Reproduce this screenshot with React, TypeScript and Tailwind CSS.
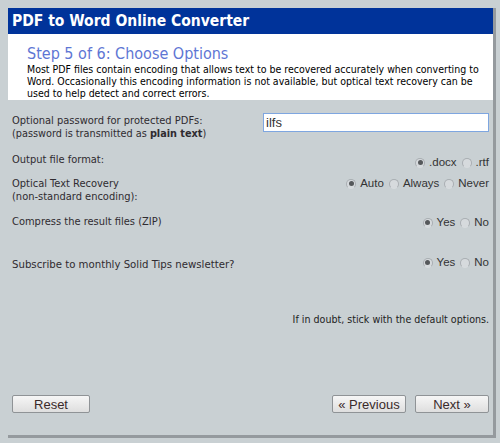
import React, { useState } from "react";

const sans = "font-['DejaVu_Sans_Condensed','DejaVu_Sans',sans-serif]";
const arial = "font-['Liberation_Sans',Arial,sans-serif]";

interface Option {
  value: string;
  label: string;
}

function Radio({ checked, onClick }: { checked: boolean; onClick: () => void }) {
  return (
    <span
      onClick={onClick}
      className="inline-flex items-center justify-center w-[10px] h-[10px] rounded-full border border-[#a9aeb2] border-b-[#d8dcde] bg-[#d6dadd]"
    >
      {checked && <span className="w-[5px] h-[5px] rounded-full bg-[#55585b]" />}
    </span>
  );
}

function RadioGroup({
  options,
  value,
  onChange,
}: {
  options: Option[];
  value: string;
  onChange: (v: string) => void;
}) {
  return (
    <div className={`flex items-center gap-[5px] text-[11.5px] text-[#333] ${arial}`}>
      {options.map((o) => (
        <label key={o.value} className="flex items-center gap-[4px] cursor-pointer">
          <Radio checked={value === o.value} onClick={() => onChange(o.value)} />
          <span>{o.label}</span>
        </label>
      ))}
    </div>
  );
}

function Button({ children, className }: { children: React.ReactNode; className?: string }) {
  return (
    <button
      type="button"
      className={`h-[18px] border border-[#8f9396] rounded-[2px] bg-gradient-to-b from-[#f6f6f6] to-[#dedede] text-[13px] leading-none text-[#3a2a2a] ${arial} ${className ?? ""}`}
    >
      {children}
    </button>
  );
}

export default function App() {
  const [format, setFormat] = useState("docx");
  const [ocr, setOcr] = useState("auto");
  const [zip, setZip] = useState("yes");
  const [news, setNews] = useState("yes");
  const [password, setPassword] = useState("ilfs");

  return (
    <div className="w-[500px] h-[443px] bg-[#c9d0d3] pt-[8px] pl-[8px]">
      <div className="w-[488px] h-[430px] flex flex-col border-r-[3px] border-b-[3px] border-[#959a9e]">
        {/* header */}
        <div className="h-[26px] bg-[#00339a] flex items-center pl-[4px] pt-[2px]">
          <h1 className={`text-white font-bold text-[15.5px] ${sans}`}>PDF to Word Online Converter</h1>
        </div>

        {/* step intro */}
        <div className="h-[66px] bg-white pl-[19px] pr-[10px] pt-[11px]">
          <h2 className={`text-[#5e76d4] text-[16px] leading-[18px] ${sans}`}>Step 5 of 6: Choose Options</h2>
          <p className={`text-black text-[10.5px] leading-[12px] ${sans}`}>
            Most PDF files contain encoding that allows text to be recovered accurately when converting to
            Word. Occasionally this encoding information is not available, but optical text recovery can be
            used to help detect and correct errors.
          </p>
        </div>

        {/* options */}
        <div className={`flex-1 flex flex-col px-[4px] pt-[13px] text-[#2f2b30] ${sans}`}>
          <div className="h-[38px] flex justify-between">
            <div className="pt-[1px]">
              <div className="text-[11px] leading-[13px]">Optional password for protected PDFs:</div>
              <div className="text-[10.8px] leading-[13px]">
                (password is transmitted as <b>plain text</b>)
              </div>
            </div>
            <input
              value={password}
              onChange={(e) => setPassword(e.target.value)}
              className={`w-[226px] h-[19px] border border-[#7ea6e0] bg-white px-[2px] text-[13px] text-[#333] outline-none ${arial}`}
            />
          </div>

          <div className="h-[24px] flex justify-between">
            <div className="text-[11px] leading-[13px] pt-[2px]">Output file format:</div>
            <div className="pt-[3px]">
              <RadioGroup
                options={[
                  { value: "docx", label: ".docx" },
                  { value: "rtf", label: ".rtf" },
                ]}
                value={format}
                onChange={setFormat}
              />
            </div>
          </div>

          <div className="h-[38px] flex justify-between">
            <div className="pt-[2px]">
              <div className="text-[11px] leading-[13px]">Optical Text Recovery</div>
              <div className="text-[11px] leading-[13px]">(non-standard encoding):</div>
            </div>
            <div className="pt-[0px]">
              <RadioGroup
                options={[
                  { value: "auto", label: "Auto" },
                  { value: "always", label: "Always" },
                  { value: "never", label: "Never" },
                ]}
                value={ocr}
                onChange={setOcr}
              />
            </div>
          </div>

          <div className="h-[43px] flex justify-between">
            <div className="text-[11px] leading-[13px] pt-[2px]">Compress the result files (ZIP)</div>
            <div className="pt-[1px]">
              <RadioGroup
                options={[
                  { value: "yes", label: "Yes" },
                  { value: "no", label: "No" },
                ]}
                value={zip}
                onChange={setZip}
              />
            </div>
          </div>

          <div className="h-[57px] flex justify-between">
            <div className="text-[11.3px] leading-[13px] pt-[2px]">Subscribe to monthly Solid Tips newsletter?</div>
            <div className="-mt-[2px]">
              <RadioGroup
                options={[
                  { value: "yes", label: "Yes" },
                  { value: "no", label: "No" },
                ]}
                value={news}
                onChange={setNews}
              />
            </div>
          </div>

          <div className="text-right text-[10.6px] leading-[13px] text-[#222]">
            If in doubt, stick with the default options.
          </div>

          <div className="mt-auto mb-[22px] flex justify-between items-center">
            <Button className="w-[78px]">Reset</Button>
            <div className="flex gap-[9px]">
              <Button className="w-[74px]">« Previous</Button>
              <Button className="w-[74px]">Next »</Button>
            </div>
          </div>
        </div>
      </div>
    </div>
  );
}
